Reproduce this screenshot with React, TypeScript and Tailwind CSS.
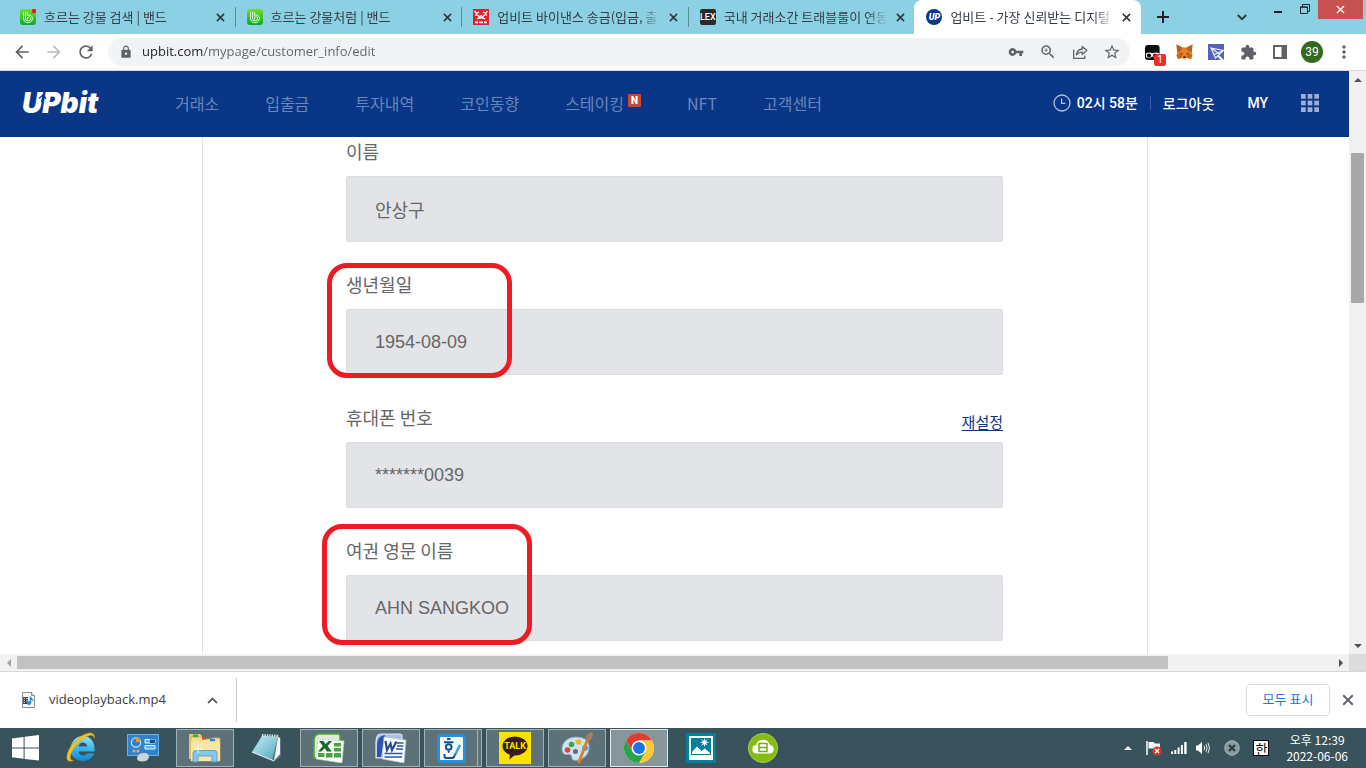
import type { ReactNode } from "react";
import {
  MdArrowBack,
  MdArrowForward,
  MdRefresh,
  MdLock,
  MdVpnKey,
  MdZoomIn,
  MdStarBorder,
  MdExtension,
  MdMoreVert,
} from "react-icons/md";

const UI = "font-['Noto_Sans_CJK_KR',sans-serif]";
const SEGOE = "font-['Open_Sans','Noto_Sans_CJK_KR',sans-serif]";

/* ---------- small drawings ---------- */

function Cross({ size, color, width }: { size: number; color: string; width: number }) {
  return (
    <svg width={size} height={size} viewBox="0 0 10 10" stroke={color} strokeWidth={width} aria-hidden="true">
      <path d="M1 1L9 9M9 1L1 9" />
    </svg>
  );
}

function BandIcon({ alert }: { alert?: boolean }) {
  return (
    <svg width="16" height="16" viewBox="0 0 16 16" fill="none" aria-hidden="true">
      <defs>
        <linearGradient id="band" x1="0" y1="0" x2="0" y2="1">
          <stop offset="0" stopColor="#6de32d" />
          <stop offset="1" stopColor="#0aa825" />
        </linearGradient>
      </defs>
      <rect width="16" height="16" rx="3" fill="url(#band)" />
      <path
        d="M3.6 3V9.4A4.400 4.400 0 0 0 12.400 9.400C12.400 6.600 9.600 5.400 7.600 6.400M5.600 3V9.400A2.500 2.500 0 0 0 10.600 9.400C10.600 7.800 8.800 7.200 7.600 8.200V10.400M7.600 3V6.400"
        stroke="#e9ffe2"
        strokeWidth="1"
      />
      {alert && <circle cx="14" cy="2" r="2.2" fill="#f01818" />}
    </svg>
  );
}

function RedSealIcon() {
  return (
    <svg width="16" height="16" viewBox="0 0 16 16" fill="none" aria-hidden="true">
      <rect width="16" height="16" fill="#e3202c" />
      <path d="M1.500 2L3.500 4.500L6 3M14.500 2L12.500 4.500L10 3" stroke="#fff" strokeWidth="1.300" />
      <path d="M2 6Q5 5.500 6 7.500L8 6.800L10 7.500Q11 5.500 14 6M4 10Q8 7.500 12 10" stroke="#fff" strokeWidth="1.300" />
      <path d="M2 13.300H5M6 13.300H10M11 13.300H14" stroke="#fff" strokeWidth="1.800" />
    </svg>
  );
}

function LexIcon() {
  return (
    <span className="flex h-4 w-4 items-center justify-center rounded-[2px] bg-[#2b2b2b] font-['Roboto',sans-serif] text-[9px] font-medium leading-none text-white">
      LEX
    </span>
  );
}

function UpIcon() {
  return (
    <span className="flex h-4 w-4 items-center justify-center rounded-full bg-[#093687] font-['Roboto',sans-serif] text-[9px] font-black italic leading-none text-white">
      UP
    </span>
  );
}

function ShareIcon() {
  return (
    <svg width="16" height="16" viewBox="0 0 16 16" fill="none" stroke="#5f6368" strokeWidth="1.3" strokeLinejoin="round" aria-hidden="true">
      <path d="M1.7 5.5V14.3H12.8V11.5" />
      <path d="M4.4 10.8C5 7 7.2 5.2 10.2 5V2.4L14.8 6.6L10.2 10.6V8.1C7.8 8.1 6 8.9 4.4 10.8Z" />
    </svg>
  );
}

function GhostExtIcon() {
  return (
    <svg width="15" height="15" viewBox="0 0 15 15" aria-hidden="true">
      <path d="M3 0H12Q14.6 0 14.6 3V15H3Q0 15 0 12V3Q0 0 3 0Z" fill="#0b0b0b" />
      <path d="M1 8.6Q4 6.6 7.4 8.2Q11 6.6 14.6 8.6V13L10 13.6L7.4 11.5L4 13.4L1 12Z" fill="#fff" />
      <circle cx="4" cy="10.6" r="2.1" fill="#0b0b0b" />
      <circle cx="10" cy="10.4" r="2" fill="#0b0b0b" />
    </svg>
  );
}

function FoxIcon() {
  return (
    <svg width="17" height="16" viewBox="0 0 17 16" aria-hidden="true">
      <path d="M.5.5L6.5 3.6H10.5L16.5.5L15.8 8.2L16.4 11.4L15 15L10.8 13.8L9.6 15.2H7.4L6.2 13.8L2 15L.6 11.4L1.2 8.2Z" fill="#e88024" />
      <path d="M.5.5L6.5 3.6L5.4 6.4L1.2 8.2ZM16.5.5L10.5 3.6L11.6 6.4L15.8 8.2Z" fill="#b5622c" />
      <path d="M.6 11.4L5 8.6L6.2 13.8L2 15ZM16.4 11.4L12 8.6L10.8 13.8L15 15Z" fill="#cd6116" />
      <path d="M6.2 13.2H10.8L9.6 15.4H7.4Z" fill="#d7c1b3" />
      <path d="M7.2 12.6H9.8L9.6 14H7.4Z" fill="#161616" />
      <path d="M4.6 8.6L6.8 9.8L5.8 10.4ZM12.4 8.6L10.2 9.8L11.2 10.4Z" fill="#233447" />
    </svg>
  );
}

function PurpleExtIcon() {
  return (
    <svg width="16" height="16" viewBox="0 0 16 16" fill="none" aria-hidden="true">
      <path d="M0 0H16V16H0Z" fill="#5660be" />
      <path d="M3 4L15.500 6.500L7.500 14ZM3 4L11.500 10M15.500 6.500L6.300 10.500" stroke="#eceefc" strokeWidth="1.200" />
      <path d="M11 11L16 16H12.500L9.500 12.500Z" fill="#eceefc" />
    </svg>
  );
}

function ClockIcon() {
  return (
    <svg width="18" height="18" viewBox="0 0 18 18" fill="none" stroke="#b4c3de" strokeWidth="1.3" aria-hidden="true">
      <circle cx="9" cy="9" r="8" />
      <path d="M8.6 4.5V9.4H12.4" />
    </svg>
  );
}

function GridIcon() {
  const steps = [0, 7, 14];
  return (
    <svg width="18" height="18" viewBox="0 0 19 19" fill="#9caed1" aria-hidden="true">
      {steps.map((y) => steps.map((x) => <rect key={`${x}-${y}`} x={x} y={y} width="5" height="5" />))}
    </svg>
  );
}

function VideoFileIcon() {
  return (
    <svg width="13" height="16" viewBox="0 0 13 16" aria-hidden="true">
      <path d="M.5.5H9.5L12.5 3.5V15.5H.5Z" fill="#f7f9fb" stroke="#8b8f94" />
      <path d="M9.5.5V3.5H12.5" fill="#dfe3e7" stroke="#8b8f94" />
      <path d="M1 5H6V12H1Z" fill="#3b444c" />
      <path d="M1.600 6.500H3M1.600 8.500H3M1.600 10.500H3M4 6.500H6M4 9H6" stroke="#e6eef4" strokeWidth=".8" />
      <ellipse cx="7" cy="11" rx="2.200" ry="1.900" fill="#1b95e0" />
      <path d="M7.800 4.500H9C9.200 6 11.600 6.600 11.400 9.500C10.800 8.400 10 8 9.200 7.900V11H7.800Z" fill="#1b95e0" />
    </svg>
  );
}

function WindowsIcon() {
  return (
    <svg width="27" height="26" viewBox="0 0 27 26" fill="#fff" aria-hidden="true">
      <path d="M0 3.6L11.6 2V12.4H0ZM12.6 1.8L27 0V12.4H12.6ZM0 13.5H11.6V23.8L0 22.2ZM12.6 13.5H27V25.6L12.6 23.9Z" />
    </svg>
  );
}

function ExplorerEIcon() {
  return (
    <svg width="32" height="32" viewBox="0 0 32 32" fill="none" aria-hidden="true">
      <defs>
        <linearGradient id="ie" x1="0" y1="0" x2="0" y2="1">
          <stop offset="0" stopColor="#9be3fb" />
          <stop offset=".5" stopColor="#36b7ee" />
          <stop offset="1" stopColor="#1684cc" />
        </linearGradient>
      </defs>
      <path
        d="M29.6 19.4H13.6C13.8 22 15.8 23.4 18 23.4C20 23.4 21.4 22.6 22.2 21.4H29C27.4 26.2 23.2 29 17.8 29C11 29 5.500 24.2 5.500 17C5.500 9.800 11 4 17.8 4C25 4 30.4 9.600 29.6 19.4ZM13.6 14.6H22.2C22 12 20.2 10.4 17.8 10.4C15.6 10.4 13.8 12 13.6 14.6Z"
        fill="url(#ie)"
      />
      <path d="M29.2 6.4C30.2 2.6 27.4 .2 22.4 1.4C14 3.4 4.400 13.6 2.200 22.6C1 28.500 3.600 30.500 8.400 28.4C5.400 28.4 4.600 26.2 5.800 22.6C8.400 14.8 16 7 22.8 4C26.6 2.400 28.800 3.200 29.2 6.400Z" fill="#f7c21d" stroke="#d59a10" strokeWidth=".5" />
    </svg>
  );
}

function ControlPanelIcon() {
  return (
    <svg width="32" height="28" viewBox="0 0 32 28" fill="none" aria-hidden="true">
      <rect x=".5" y=".5" width="31" height="21" fill="#2f83cc" stroke="#65aee6" />
      <circle cx="9" cy="8.5" r="4.6" stroke="#b9e3fb" strokeWidth="1.3" />
      <path d="M9 8V3A5 5 0 0 1 13.5 8Z" fill="#f59a22" />
      <path d="M18 5.5H28V9H18ZM18 11.5H28V15H18Z" fill="#55b7f0" stroke="#e6f6ff" />
      <path d="M23 5.5H28V9H23Z" fill="#174f89" />
      <circle cx="7" cy="17" r="1.5" fill="#f2a541" />
      <circle cx="11" cy="17" r="1.5" fill="#f2a541" />
      <path d="M10 24Q11 19 17 19Q22 19 22 23Q21 27.500 15 27.500Q10 27.500 10 24Z" fill="#cfd3d6" />
    </svg>
  );
}

function FolderIcon() {
  return (
    <svg width="32" height="30" viewBox="0 0 32 30" aria-hidden="true">
      <path d="M0 2Q0 1 1 1H11L13 3V26H0Z" fill="#e9c968" />
      <path d="M2 4H13L14 6H22L24 5H31V28H2Z" fill="#f6df94" stroke="#cda74a" strokeWidth=".8" />
      <rect x="4" y="1.5" width="5" height="2.6" fill="#2fae44" />
      <rect x="13" y="4" width="4" height="2.6" fill="#e0482b" />
      <rect x="21" y="6" width="5" height="2.4" fill="#3186dc" />
      <path d="M2 8.5H31V28H2Z" fill="#f8e6a8" />
      <path d="M4 29V20Q4 17.500 7 17.500H25Q28 17.500 28 20V29H23V23H9V29Z" fill="#85c7ec" stroke="#4c97c7" strokeWidth=".8" />
      <path d="M9 12V20M5 16H13" stroke="#fff" />
    </svg>
  );
}

function NotepadIcon() {
  return (
    <svg width="32" height="30" viewBox="0 0 32 30" aria-hidden="true">
      <defs>
        <linearGradient id="pad" x1="0" y1="0" x2="1" y2="1">
          <stop offset="0" stopColor="#c4e8ee" />
          <stop offset=".5" stopColor="#8accdb" />
          <stop offset="1" stopColor="#4e9fb5" />
        </linearGradient>
      </defs>
      <path d="M11 3L30 4V23L23 29L1 20Z" fill="#5d7580" />
      <path d="M27 4L29 5V21L23 28Z" fill="#eef5f6" />
      <path d="M11 3L27 4L21 27L1 19Z" fill="url(#pad)" />
      <path d="M1 19L21 27L23 28" fill="none" stroke="#eef5f6" />
      <path d="M11 2.500L28 3.300" stroke="#dde6e8" strokeWidth="3" strokeDasharray="1.400 1" />
    </svg>
  );
}

function ExcelIcon() {
  return (
    <svg width="32" height="30" viewBox="0 0 32 30" aria-hidden="true">
      <path d="M6 1H25Q27 1 27 3V25H1V9Q1 1 6 1Z" fill="#dcebdc" stroke="#4cab2e" strokeWidth="1.6" />
      <path d="M5 6L31 8L29 30L3 26Z" fill="#fbfdfb" stroke="#bcd0bc" strokeWidth=".6" />
      <path d="M21 10H28V13.5H21ZM21 15H28V18.5H21ZM21 20H28V24.5H21ZM13 20H19.5V24.5H13ZM5 20H11.5V24H5Z" fill="#4da046" />
      <path d="M6 8H10.5L12.6 11L15.6 8H19L14.6 13L18.8 18.6H14L11.6 15.2L8.4 18.6H5L9.8 13Z" fill="#1d6b2a" />
    </svg>
  );
}

function WordIcon() {
  return (
    <svg width="32" height="30" viewBox="0 0 32 30" aria-hidden="true">
      <path d="M6 1H25Q27 1 27 3V25H1V9Q1 1 6 1Z" fill="#a9bfe6" stroke="#dfe8f7" strokeWidth="1.2" />
      <path d="M2 12Q2 3 10 2L6 24H2Z" fill="#2c56aa" />
      <path d="M9 4L31 7L29 30L7 26Z" fill="#fbfcfe" stroke="#b5c2dc" strokeWidth=".6" />
      <path d="M22 10H28.5M22 13H28.5M21 16H28M9.5 20.5H27.5M9.5 24H27" stroke="#2b579a" strokeWidth="1.7" />
      <path d="M10.5 8L12 17L15.5 10.5L17 17L21.5 8.5" fill="none" stroke="#234a94" strokeWidth="2.2" />
    </svg>
  );
}

function HangulAppIcon() {
  return (
    <span className="flex h-[29px] w-[29px] items-center justify-center rounded-[4px] border-[3px] border-[#2590dc] bg-[#f4faff]">
      <svg width="21" height="23" viewBox="0 0 21 23" fill="none" aria-hidden="true">
        <path d="M6 2H9.500M3 5.200H12.500" stroke="#164f93" strokeWidth="2" />
        <circle cx="7.700" cy="10" r="2.800" stroke="#164f93" strokeWidth="2" />
        <circle cx="7.700" cy="14.800" r="1.100" fill="#164f93" />
        <path d="M3.500 17V19.500Q3.500 21 5.500 21H11Q13 21 13.500 18.500" stroke="#164f93" strokeWidth="2" />
        <path d="M19 8L14.500 17" stroke="#3aa4e3" strokeWidth="2.600" />
        <path d="M13.300 16.500L15.600 17.600L13.200 19.800Z" fill="#164f93" />
      </svg>
    </span>
  );
}

function TalkIcon() {
  return (
    <span className="relative flex h-8 w-8 items-center justify-center bg-[#fbe300]">
      <svg width="26" height="24" viewBox="0 0 26 24" fill="#371d1e" aria-hidden="true">
        <ellipse cx="13" cy="10" rx="12.5" ry="9.5" />
        <path d="M8 17L7.4 23.5L14 18Z" />
      </svg>
      <span className="absolute inset-x-0 top-[10px] text-center font-['Roboto',sans-serif] text-[9px] font-bold leading-none text-[#fbe300]">
        TALK
      </span>
    </span>
  );
}

function PaintIcon() {
  return (
    <svg width="32" height="32" viewBox="0 0 32 32" fill="none" aria-hidden="true">
      <path d="M15 5C6 5 1 11 1 17C1 22 4 23 7 22.5C10 22 11 24 11 27C12 30 26 29 28 17C29 9 24 5 15 5Z" fill="#cfe2f0" stroke="#86a9c2" />
      <circle cx="14.500" cy="19.500" r="2.500" fill="#5b7078" />
      <circle cx="6.5" cy="18" r="2.800" fill="#e0452e" />
      <circle cx="10.5" cy="12.5" r="2.800" fill="#38a84b" />
      <circle cx="17.500" cy="10" r="2.800" fill="#f2b822" />
      <circle cx="24" cy="16" r="2.800" fill="#3b8fdb" />
      <path d="M26 9L18 30" stroke="#d9822b" strokeWidth="3" strokeLinecap="round" />
      <path d="M24.500 8Q24 2 31 0Q34 4 28.500 9.500Z" fill="#a57f5c" />
    </svg>
  );
}

function ChromeIcon() {
  return (
    <svg width="30" height="30" viewBox="0 0 48 48" aria-hidden="true">
      <circle cx="24" cy="24" r="24" fill="#fff" />
      <path d="M24 12H44.800A24 24 0 0 0 3.200 12L13.600 30Z" fill="#e33b2e" />
      <path d="M34.400 30L24 48A24 24 0 0 0 44.800 12H24Z" fill="#fcc934" />
      <path d="M13.600 30L3.200 12A24 24 0 0 0 24 48L34.400 30Z" fill="#2ba24c" />
      <circle cx="24" cy="24" r="12" fill="#fff" />
      <circle cx="24" cy="24" r="9.500" fill="#1a73e8" />
    </svg>
  );
}

function PhotosIcon() {
  return (
    <svg width="30" height="30" viewBox="0 0 30 30" fill="none" aria-hidden="true">
      <rect width="30" height="30" fill="#00819b" />
      <path d="M3 3H27V27H3ZM5 5V22H25V5Z" fill="#fff" fillRule="evenodd" />
      <path d="M6 21V19L11 13.500L15.500 18L19 15.500L24 20V21Z" fill="#fff" />
      <circle cx="18.500" cy="9.500" r="2.200" fill="#fff" />
      <path d="M18.500 5.500V13.500M14.500 9.500H22.500M15.700 6.700L21.300 12.300M21.300 6.700L15.700 12.300" stroke="#fff" strokeWidth=".8" />
    </svg>
  );
}

function CloudIcon() {
  return (
    <svg width="30" height="30" viewBox="0 0 30 30" fill="none" aria-hidden="true">
      <circle cx="15" cy="15" r="14.600" fill="#86bc10" stroke="#b5dc5a" strokeWidth=".8" />
      <path d="M8 20.500A4.300 4.300 0 0 1 8 12A7.300 7.300 0 0 1 22 12A4.300 4.300 0 0 1 22 20.500Z" fill="#fff" />
      <path d="M11 10.500H19V18.500H11ZM11 14.500H19" stroke="#7aab14" strokeWidth="1.500" />
    </svg>
  );
}

function FlagIcon() {
  return (
    <svg width="16" height="16" viewBox="0 0 16 16" aria-hidden="true">
      <path d="M1 1V15" stroke="#fff" strokeWidth="1.500" />
      <path d="M2.500 2H7.500L9 3.500H14V9.500H8L7 8.500H2.500Z" fill="#f6f8f9" />
      <circle cx="11" cy="11" r="4.500" fill="#dd3425" />
      <path d="M9 9L13 13M13 9L9 13" stroke="#fff" strokeWidth="1.400" />
    </svg>
  );
}

function SignalIcon() {
  return (
    <svg width="16" height="12" viewBox="0 0 16 12" fill="#fff" aria-hidden="true">
      <path d="M0 9.500H2V12H0ZM3.300 8H5.300V12H3.300ZM6.600 5.500H8.600V12H6.600ZM9.900 3H11.900V12H9.900ZM13.200 0H15.600V12H13.200Z" />
    </svg>
  );
}

function VolumeIcon() {
  return (
    <svg width="16" height="14" viewBox="0 0 16 14" fill="none" aria-hidden="true">
      <path d="M1 4.500H3L7 .8V13.200L3 9.500H1Z" fill="#fff" />
      <path d="M9 4.800Q10.300 7 9 9.200M11 3.200Q13.200 7 11 10.800M13 1.800Q16 7 13 12.200" stroke="#e3e9eb" />
    </svg>
  );
}

/* ---------- browser chrome ---------- */

const tabs: { title: string; icon: ReactNode; active?: boolean }[] = [
  { title: "흐르는 강물 검색 | 밴드", icon: <BandIcon alert /> },
  { title: "흐르는 강물처럼 | 밴드", icon: <BandIcon /> },
  { title: "업비트 바이낸스 송금(입금, 출", icon: <RedSealIcon /> },
  { title: "국내 거래소간 트래블룰이 연동", icon: <LexIcon /> },
  { title: "업비트 - 가장 신뢰받는 디지털", icon: <UpIcon />, active: true },
];

function TabStrip() {
  return (
    <header className="flex h-[34px] shrink-0 bg-[#8cd1e3] pl-2">
      <div className="flex w-full max-w-[1133px]">
        {tabs.map((tab, i) => (
          <div
            key={tab.title}
            className={`relative flex min-w-0 flex-1 basis-0 items-center pl-3 pr-[6px] ${tab.active ? "rounded-t-lg bg-white" : ""}`}
          >
            {i > 0 && !tab.active && <span className="absolute left-0 top-[7px] h-5 w-px bg-[#5b8996]" />}
            <span className="shrink-0">{tab.icon}</span>
            <span
              className={`ml-2 flex-1 overflow-hidden whitespace-nowrap text-[13px] leading-5 text-[#333c46] [mask-image:linear-gradient(90deg,#000_calc(100%-22px),transparent)] ${UI}`}
            >
              {tab.title}
            </span>
            <button type="button" aria-label={`${tab.title} 닫기`} className="ml-1 flex h-4 w-4 items-center justify-center">
              <Cross size={9} color="#30393f" width={1.8} />
            </button>
          </div>
        ))}
      </div>
      <button type="button" aria-label="새 탭" className="ml-2 flex w-7 shrink-0 items-center justify-center">
        <svg width="12" height="12" viewBox="0 0 12 12" stroke="#202124" strokeWidth="2" aria-hidden="true">
          <path d="M6 0V12M0 6H12" />
        </svg>
      </button>
      <div className="ml-auto flex items-start pr-[3px]">
        <button type="button" aria-label="탭 검색" className="flex h-[34px] w-9 items-center justify-center">
          <svg width="10" height="7" viewBox="0 0 10 7" fill="none" stroke="#2a3338" strokeWidth="1.8" aria-hidden="true">
            <path d="M.8 1L5 5.200L9.200 1" />
          </svg>
        </button>
        <button type="button" aria-label="최소화" className="ml-[5px] flex h-6 w-[26px] items-center justify-center">
          <span className="h-[2px] w-2 bg-[#222]" />
        </button>
        <button type="button" aria-label="이전 크기로" className="flex h-[18px] w-[27px] items-center justify-center">
          <svg width="10" height="10" viewBox="0 0 10 10" fill="none" stroke="#222" aria-hidden="true">
            <path d="M.5 3H7.500V9.500H.5ZM2.500 3V.5H9.500V7.500H7.500" />
            <path d="M0 3.200H8" />
          </svg>
        </button>
        <button type="button" aria-label="닫기" className="flex h-[19px] w-[45px] items-center justify-center bg-[#c75050]">
          <Cross size={9} color="#fff" width={1.6} />
        </button>
      </div>
    </header>
  );
}

function IconButton({ label, children }: { label: string; children: ReactNode }) {
  return (
    <button type="button" aria-label={label} className="relative flex h-7 w-8 shrink-0 items-center justify-center">
      {children}
    </button>
  );
}

function Toolbar() {
  return (
    <div className="flex h-9 shrink-0 items-center bg-white pl-[6px] pr-[6px]">
      <IconButton label="뒤로"><MdArrowBack size={20} color="#5f6368" /></IconButton>
      <IconButton label="앞으로"><MdArrowForward size={20} color="#babcbe" /></IconButton>
      <IconButton label="새로고침"><MdRefresh size={20} color="#5f6368" /></IconButton>
      <div className="ml-[6px] mr-[6px] flex h-7 flex-1 items-center rounded-full bg-[#f1f3f4] pl-[11px] pr-[2px]">
        <MdLock size={14} color="#5f6368" />
        <input
          aria-label="주소창"
          readOnly
          value="upbit.com/mypage/customer_info/edit"
          className={`ml-[9px] min-w-0 flex-1 bg-[linear-gradient(90deg,#202124_61px,#5f6368_61px)] bg-clip-text text-[13px] text-transparent outline-none ${SEGOE}`}
        />
        <IconButton label="비밀번호"><MdVpnKey size={16} color="#5f6368" /></IconButton>
        <IconButton label="확대"><MdZoomIn size={18} color="#5f6368" /></IconButton>
        <IconButton label="공유"><ShareIcon /></IconButton>
        <IconButton label="북마크"><MdStarBorder size={18} color="#5f6368" /></IconButton>
      </div>
      <IconButton label="확장 프로그램 1">
        <GhostExtIcon />
        <span className="absolute bottom-0 right-[2px] flex h-3 w-3 items-center justify-center rounded-[2px] bg-[#ea2f2f] font-['Roboto',sans-serif] text-[10px] leading-none text-white">
          1
        </span>
      </IconButton>
      <IconButton label="지갑"><FoxIcon /></IconButton>
      <IconButton label="확장 프로그램 2"><PurpleExtIcon /></IconButton>
      <IconButton label="확장 프로그램"><MdExtension size={17} color="#5f6368" /></IconButton>
      <IconButton label="측면 패널">
        <svg width="14" height="14" viewBox="0 0 14 14" aria-hidden="true">
          <path d="M0 0H14V14H0ZM2 2V12H8.500V2Z" fill="#5f6368" fillRule="evenodd" />
        </svg>
      </IconButton>
      <IconButton label="프로필">
        <span className="flex h-[22px] w-[22px] items-center justify-center rounded-full bg-[#33691e] font-['Roboto',sans-serif] text-xs text-white">
          39
        </span>
      </IconButton>
      <IconButton label="메뉴"><MdMoreVert size={20} color="#5f6368" /></IconButton>
    </div>
  );
}

/* ---------- site ---------- */

const navItems = ["거래소", "입출금", "투자내역", "코인동향", "스테이킹", "NFT", "고객센터"];

function SiteHeader() {
  return (
    <div className={`flex h-[66px] shrink-0 items-center bg-[#093687] pb-[2px] pl-[22px] pr-[30px] text-base text-white ${UI}`}>
      <a href="#home" className="relative w-[153px] font-['Inter',sans-serif] text-[28px] font-black italic leading-8">
        UPbit
        <svg width="10" height="10" viewBox="0 0 10 10" className="absolute left-4 top-[6px]" fill="none" stroke="#093687" strokeWidth="1.300" aria-hidden="true">
          <path d="M1 5.500L5.500 1.500L8 6M5.500 1.500L3.500 9" />
        </svg>
      </a>
      <nav className="flex gap-[46px] text-[#6b86b7]">
        {navItems.map((item) => (
          <a key={item} href="#menu" className="flex whitespace-nowrap leading-6">
            {item}
            {item === "스테이킹" && (
              <span className="ml-1 mt-[3px] flex h-[13px] w-[13px] items-center justify-center rounded-[1px] bg-[#c84a31] font-['Roboto',sans-serif] text-[10px] font-black leading-none text-white">
                N
              </span>
            )}
          </a>
        ))}
      </nav>
      <div className="ml-auto flex items-center whitespace-nowrap text-sm font-medium leading-6">
        <ClockIcon />
        <span className="ml-[6px] font-['Roboto','Noto_Sans_CJK_KR',sans-serif]">02시 58분</span>
        <span className="ml-3 h-[14px] w-px bg-[#3a5e9f]" />
        <a href="#logout" className="ml-3">로그아웃</a>
        <a href="#my" className="ml-[33px] font-['Roboto',sans-serif]">MY</a>
        <button type="button" aria-label="전체 메뉴" className="ml-[33px]"><GridIcon /></button>
      </div>
    </div>
  );
}

function Field({ id, label, value, action, mark }: { id: string; label: string; value: string; action?: ReactNode; mark?: string }) {
  return (
    <div className="relative flex flex-col gap-3">
      <div className="flex h-6 justify-between">
        <label htmlFor={id} className="text-lg leading-[22px] text-[#666]">{label}</label>
        {action}
      </div>
      <input
        id={id}
        readOnly
        value={value}
        className="h-[66px] w-full rounded-[2px] border border-[#dcdde1] bg-[#e3e4e8] px-7 font-['Liberation_Sans','Noto_Sans_CJK_KR',sans-serif] text-lg text-[#666] outline-none"
      />
      {mark && <span className={`pointer-events-none absolute border-[5px] border-[#ed1c24] ${mark}`} />}
    </div>
  );
}

function SitePage() {
  return (
    <div className="flex min-w-0 flex-1 flex-col">
      <SiteHeader />
      <main className={`mx-auto min-h-0 w-full max-w-[946px] flex-1 overflow-hidden border-x border-[#e3e4e9] pt-[3px] ${UI}`}>
        <form className="mx-auto flex max-w-[657px] flex-col gap-[31px]">
          <Field id="name" label="이름" value="안상구" />
          <Field id="birth" label="생년월일" value="1954-08-09" mark="-left-[19px] -top-[10px] h-[115px] w-[185px] rounded-[20px]" />
          <Field
            id="phone"
            label="휴대폰 번호"
            value="*******0039"
            action={<a href="#reset" className="self-end text-[15px] leading-4 text-[#093687] underline underline-offset-2">재설정</a>}
          />
          <Field id="passport" label="여권 영문 이름" value="AHN SANGKOO" mark="-left-[24px] -top-[15px] h-[121px] w-[210px] rounded-[20px]" />
        </form>
      </main>
    </div>
  );
}

function ScrollArrow({ dir }: { dir: "up" | "down" | "left" | "right" }) {
  const points = { up: "0,4 4,0 8,4", down: "0,0 4,4 8,0", left: "4,0 0,4 4,8", right: "0,0 4,4 0,8" };
  const upright = dir === "up" || dir === "down";
  return (
    <svg width={upright ? 8 : 4} height={upright ? 4 : 8} fill={dir === "left" ? "#a3a3a3" : "#505050"} aria-hidden="true">
      <polygon points={points[dir]} />
    </svg>
  );
}

function DownloadBar() {
  return (
    <div className={`flex h-[57px] shrink-0 items-center border-t border-[#d5d7da] bg-white pl-[22px] pr-3 ${UI}`}>
      <VideoFileIcon />
      <span className={`ml-[14px] text-[13px] text-[#3c4043] ${SEGOE}`}>videoplayback.mp4</span>
      <button type="button" aria-label="다운로드 옵션" className="ml-[35px] mr-[11px] flex h-6 w-6 items-center justify-center">
        <svg width="11" height="7" viewBox="0 0 11 7" fill="none" stroke="#5f6368" strokeWidth="1.800" aria-hidden="true">
          <path d="M1 6L5.500 1.500L10 6" />
        </svg>
      </button>
      <span className="h-11 w-px bg-[#c9cbce]" />
      <button type="button" className="ml-auto h-8 w-[84px] rounded border border-[#dadce0] pb-[3px] text-[13px] leading-none text-[#1a73e8]">
        모두 표시
      </button>
      <button type="button" aria-label="닫기" className="ml-3 flex h-6 w-3 items-center justify-center">
        <Cross size={12} color="#5f6368" width={1.6} />
      </button>
    </div>
  );
}

/* ---------- taskbar ---------- */

const apps: { name: string; icon: ReactNode; state?: "open" | "active" | "stacked" }[] = [
  { name: "Internet Explorer", icon: <ExplorerEIcon /> },
  { name: "제어판", icon: <ControlPanelIcon /> },
  { name: "파일 탐색기", icon: <FolderIcon />, state: "open" },
  { name: "메모장", icon: <NotepadIcon /> },
  { name: "Excel", icon: <ExcelIcon />, state: "open" },
  { name: "Word", icon: <WordIcon />, state: "open" },
  { name: "한글", icon: <HangulAppIcon />, state: "stacked" },
  { name: "카카오톡", icon: <TalkIcon />, state: "open" },
  { name: "그림판", icon: <PaintIcon />, state: "open" },
  { name: "Chrome", icon: <ChromeIcon />, state: "active" },
  { name: "사진", icon: <PhotosIcon /> },
  { name: "클라우드", icon: <CloudIcon /> },
];

const frames = {
  none: "w-[58px]",
  open: "w-[58px] border border-[#a3b0b4] bg-[#5c7178]",
  stacked: "w-[54px] mr-1 border border-[#a3b0b4] bg-[#5c7178]",
  active: "w-[58px] border border-[#e4e9ea] bg-[#87969b]",
};

function Taskbar() {
  return (
    <footer className="flex h-10 shrink-0 items-center bg-[#38535c]">
      <button type="button" aria-label="시작" className="flex h-10 w-[50px] items-center justify-center"><WindowsIcon /></button>
      {apps.map((app) => (
        <div key={app.name} className="relative flex w-[62px] justify-center">
          <button type="button" aria-label={app.name} className={`flex h-[38px] items-center justify-center ${frames[app.state ?? "none"]}`}>
            {app.icon}
          </button>
          {app.state === "stacked" && <span className="absolute right-[2px] top-0 h-[38px] w-1 border border-l-0 border-[#a3b0b4] bg-[#5c7178]" />}
        </div>
      ))}
      <div className="ml-auto flex items-center pr-[18px]">
        <button type="button" aria-label="숨겨진 아이콘 표시" className="mr-[14px]">
          <svg width="8" height="4" fill="#fff" aria-hidden="true"><polygon points="0,4 4,0 8,4" /></svg>
        </button>
        <span className="mr-[9px]"><FlagIcon /></span>
        <span className="mr-2"><SignalIcon /></span>
        <span className="mr-[13px]"><VolumeIcon /></span>
        <svg width="16" height="16" viewBox="0 0 16 16" aria-hidden="true" className="mr-[13px]">
          <circle cx="8" cy="8" r="7.200" fill="#8a999d" stroke="#b1bcbf" />
          <path d="M5 5L11 11M11 5L5 11" stroke="#263b42" strokeWidth="2" />
        </svg>
        <span className={`mr-[17px] flex h-4 w-4 items-center justify-center border border-black bg-white text-[13px] leading-none text-black ${UI}`}>한</span>
        <div className={`text-center text-xs leading-4 text-white ${UI}`}>
          <div>오후 12:39</div>
          <div>2022-06-06</div>
        </div>
      </div>
    </footer>
  );
}

export default function App() {
  return (
    <div className="flex h-screen flex-col overflow-hidden bg-white">
      <TabStrip />
      <Toolbar />
      <div className="flex min-h-0 flex-1 border-t border-[#d5dbe0]">
        <SitePage />
        <div className="flex w-[17px] shrink-0 flex-col items-center bg-[#f1f1f1]">
          <span className="flex h-[17px] items-center"><ScrollArrow dir="up" /></span>
          <span className="mt-[65px] h-[150px] w-[13px] bg-[#a8a8a8]" />
          <span className="mt-auto flex h-[17px] items-center"><ScrollArrow dir="down" /></span>
        </div>
      </div>
      <div className="flex h-[17px] shrink-0 bg-[#f1f1f1]">
        <span className="flex w-[17px] items-center justify-center"><ScrollArrow dir="left" /></span>
        <div className="flex flex-1 items-center">
          <span className="h-[13px] w-7/8 bg-[#c1c1c1]" />
        </div>
        <span className="flex w-[17px] items-center justify-center"><ScrollArrow dir="right" /></span>
        <span className="w-[17px] bg-[#dcdcdc]" />
      </div>
      <DownloadBar />
      <Taskbar />
    </div>
  );
}
